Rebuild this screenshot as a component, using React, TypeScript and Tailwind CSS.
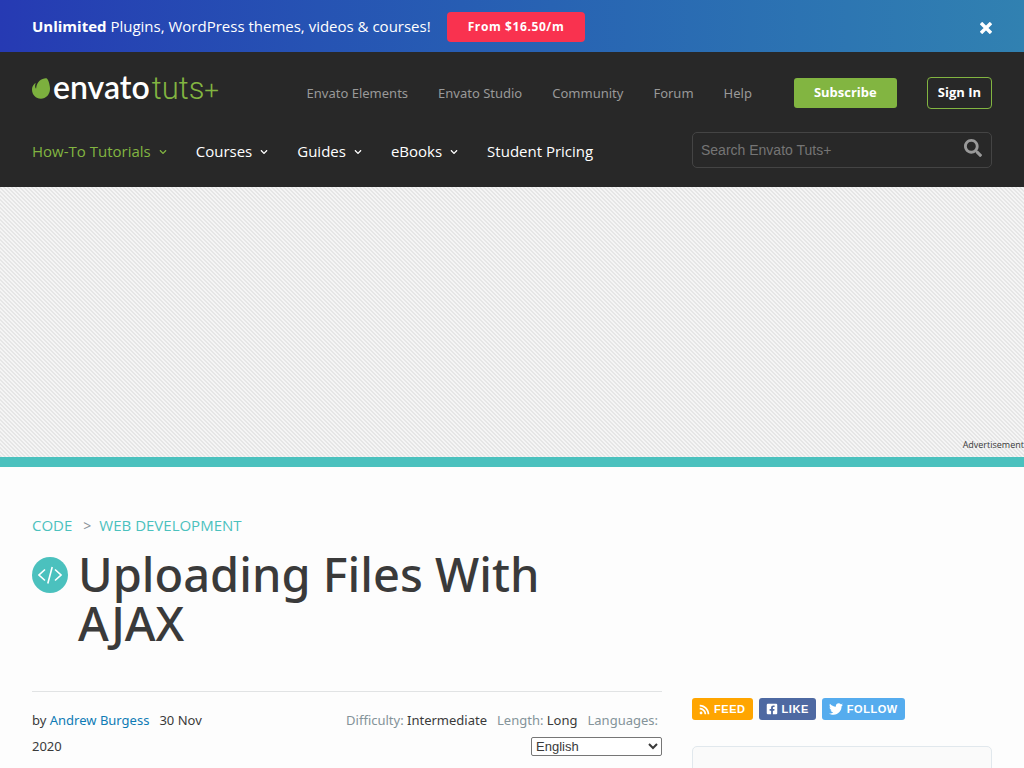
import { FaChevronDown, FaFacebookSquare, FaRss, FaSearch, FaTwitter } from "react-icons/fa";

const siteLinks = ["Envato Elements", "Envato Studio", "Community", "Forum", "Help"];

const sections = [
  { label: "How-To Tutorials", menu: true, active: true },
  { label: "Courses", menu: true, active: false },
  { label: "Guides", menu: true, active: false },
  { label: "eBooks", menu: true, active: false },
  { label: "Student Pricing", menu: false, active: false },
];

function Promo() {
  return (
    <div className="flex h-[52px] items-center bg-linear-to-r from-[#263ab3] to-[#3181b1] px-8 text-[15px] text-white">
      <p>
        <strong className="font-bold">Unlimited</strong> Plugins, WordPress themes, videos &amp; courses!
      </p>
      <a
        href="#pricing"
        className="mt-0.5 ml-4 flex h-[30px] items-center rounded-sm bg-[#f9324f] px-[21px] text-xs font-bold tracking-wider"
      >
        From $16.50/m
      </a>
      <button type="button" aria-label="Close" className="ml-auto pt-1">
        <svg viewBox="0 0 12 12" className="size-3" fill="none" stroke="currentColor" strokeWidth="3.4">
          <path d="M1 1l10 10M11 1L1 11" />
        </svg>
      </button>
    </div>
  );
}

function Logo() {
  return (
    <a href="#home" className="flex items-center">
      <svg viewBox="0 0 18 21" className="mt-px h-[21px] w-[18px]" fill="#7cb03e">
        <path d="M14.8.4c-1-.6-5 .1-7.500 2.500C4.200 5.800 4.200 10.400 4.200 10.400s-.1.500-.5-.1c-1-1.200-.5-4.100-.1-4.600.2-.5-.5-.4-.8-.2C.7 7.200 0 9.600 0 11.800c0 5 3.900 8.900 8.900 8.900s9-4 9.100-9.600C18.100 6.400 16.100 1.200 14.800.4z" />
      </svg>
      <span className="ml-[3px] flex items-baseline leading-8">
        <span className="font-['Lato',sans-serif] text-[32px] font-semibold text-white">envato</span>
        <span className="ml-0.5 font-['Roboto',sans-serif] text-[31px] font-light text-[#82b541]">tuts</span>
        <span className="font-['Roboto',sans-serif] text-[26px] font-light text-[#82b541]">+</span>
      </span>
    </a>
  );
}

function Header() {
  return (
    <header className="bg-[#282828] px-8 pt-[19px] pb-[19px]">
      <div className="flex h-11 items-center justify-between">
        <div className="-mt-2.5">
          <Logo />
        </div>
        <nav className="flex items-center font-['Noto_Sans',sans-serif] text-[13px] text-[#999999]">
          <div className="mr-[42px] flex gap-[30px] pt-0.5">
            {siteLinks.map((label) => (
              <a key={label} href="#site">
                {label}
              </a>
            ))}
          </div>
          <a href="#subscribe" className="flex h-[30px] items-center rounded-[3px] bg-[#82b541] px-5 font-['Open_Sans',sans-serif] font-bold text-white">
            Subscribe
          </a>
          <a
            href="#signin"
            className="ml-[30px] flex h-8 items-center rounded-sm border border-[#82b541] px-2.5 font-['Open_Sans',sans-serif] font-bold text-white"
          >
            Sign In
          </a>
        </nav>
      </div>
      <div className="mt-[17px] flex items-center justify-between">
        <nav className="flex gap-[29px] pt-0.5 text-[15px] text-white">
          {sections.map((s) => (
            <a key={s.label} href="#section" className={s.active ? "flex items-center text-[#82b541]" : "flex items-center"}>
              {s.label}
              {s.menu && <FaChevronDown className="mt-0.5 ml-2 size-2" />}
            </a>
          ))}
        </nav>
        <form className="flex h-9 w-[300px] items-center rounded-[5px] border border-[#444444] px-2">
          <input
            type="text"
            aria-label="Search"
            placeholder="Search Envato Tuts+"
            className="min-w-0 flex-1 bg-transparent font-['Liberation_Sans',sans-serif] text-sm text-white outline-none placeholder:text-[#757575]"
          />
          <button type="submit" aria-label="Search" className="pr-px text-[#999999]">
            <FaSearch className="mb-1 size-[18px]" />
          </button>
        </form>
      </div>
    </header>
  );
}

function Advertisement() {
  return (
    <aside className="flex h-[280px] items-end justify-end border-b-10 border-[#4bc1be] bg-[linear-gradient(45deg,#f5f5f5_25%,#e6e6e6_25%_50%,#f5f5f5_50%_75%,#e6e6e6_75%)] bg-size-[4px_4px]">
      <span className="pb-1 text-[9px] leading-4 text-[#3a3a3a]">Advertisement</span>
    </aside>
  );
}

function Article() {
  return (
    <article className="min-w-0 flex-1">
      <nav className="flex text-[15px] leading-6 text-[#4bc1be]">
        <a href="#code">CODE</a>
        <span className="mr-2 ml-[11px] pt-px font-['Noto_Sans',sans-serif] text-sm leading-6 text-[#8a9299]">&gt;</span>
        <a href="#web">WEB DEVELOPMENT</a>
      </nav>
      <div className="mt-3 flex">
        <span className="mt-[7px] flex size-9 shrink-0 items-center justify-center rounded-full bg-[#4bc1be]">
          <svg viewBox="0 0 24 18" className="h-[18px] w-6" fill="none" stroke="white" strokeWidth="1.6">
            <path d="M7 3.500L1 9l6 5.500M17 3.500L23 9l-6 5.500M14.200 1L9.800 17.500" />
          </svg>
        </span>
        <h1 className="ml-2.5 w-[500px] font-['Noto_Sans',sans-serif] text-[47px] leading-[49px] font-medium text-[#3a3a3a]">
          Uploading Files With AJAX
        </h1>
      </div>
      <div className="mt-[43px] flex items-start justify-between border-t border-[#e1e3e4] pt-[15px] text-[13px] leading-[26px] text-[#3a3a3a]">
        <div className="w-[200px] font-['Noto_Sans',sans-serif]">
          <div className="flex gap-2.5">
            <span>
              by{" "}
              <a href="#author" className="text-[#0e7bb5]">
                Andrew Burgess
              </a>
            </span>
            <span>30 Nov</span>
          </div>
          <div>2020</div>
        </div>
        <div className="flex flex-col items-end">
          <div className="flex gap-2.5 pr-1 font-['Noto_Sans',sans-serif] text-[#849399]">
            <span>
              Difficulty: <span className="text-[#3a3a3a]">Intermediate</span>
            </span>
            <span>
              Length: <span className="text-[#3a3a3a]">Long</span>
            </span>
            <label htmlFor="language">Languages:</label>
          </div>
          <select
            id="language"
            className="mt-1 h-[19px] w-[131px] rounded-xs border border-[#767676] bg-white font-['Liberation_Sans',sans-serif] text-[13px] leading-4"
          >
            <option>English</option>
            <option>Español</option>
          </select>
        </div>
      </div>
    </article>
  );
}

function Sidebar() {
  return (
    <aside className="w-[300px] shrink-0 pt-[185px]">
      <div className="flex gap-1.5 font-['Liberation_Sans',sans-serif] text-[11px] font-bold tracking-wider text-white">
        <a href="#feed" className="flex h-[22px] items-center gap-1 rounded-[3px] bg-[#ffa500] px-[7px]">
          <FaRss className="size-[11px]" />
          FEED
        </a>
        <a href="#like" className="flex h-[22px] items-center gap-1 rounded-[3px] bg-[#4e69a2] px-[7px]">
          <FaFacebookSquare className="size-3" />
          LIKE
        </a>
        <a href="#follow" className="flex h-[22px] items-center gap-1 rounded-[3px] bg-[#55acee] px-[7px]">
          <FaTwitter className="size-3.5" />
          FOLLOW
        </a>
      </div>
      <div className="mt-[26px] h-60 rounded-[5px] border border-[#e1e8ed] bg-[#fafafa]" />
    </aside>
  );
}

export default function App() {
  return (
    <div className="h-screen overflow-hidden bg-[#fdfdfd] font-['Open_Sans',sans-serif]">
      <Promo />
      <Header />
      <Advertisement />
      <main className="flex gap-[30px] px-8 pt-[46px]">
        <Article />
        <Sidebar />
      </main>
    </div>
  );
}
